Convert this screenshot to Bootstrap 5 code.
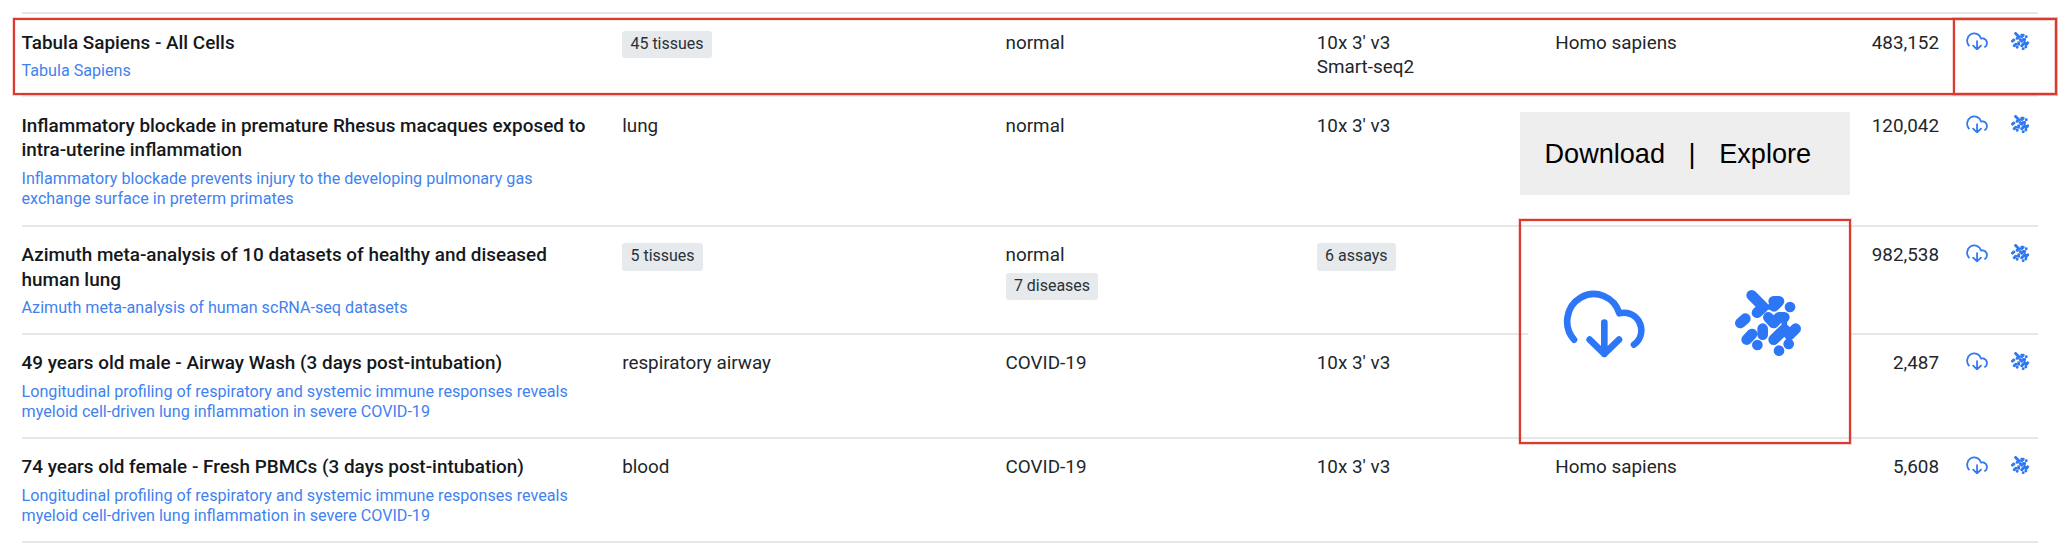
<!DOCTYPE html>
<html lang="en">
<head>
<meta charset="utf-8">
<meta name="viewport" content="width=device-width, initial-scale=1">
<title>Datasets</title>
<link href="https://cdn.jsdelivr.net/npm/bootstrap@5.3.0/dist/css/bootstrap.min.css" rel="stylesheet">
<style>
  body { font-family: Roboto, sans-serif; font-size: 18.85px; line-height: 24.4px; color: #22262a; background: #fff; }
  .stage { width: 2066px; height: 544px; }
  .datasets { width: 2016px; margin-left: 21.5px; padding-top: 12px; }
  .dataset { display: grid; grid-template-columns: 600.7px 383.4px 311.2px 238.6px 383.7px 1fr; padding-top: 16.8px; border-bottom: 2px solid #e6e7e8; }
  .datasets .top-rule { height: 2px; background: #e6e7e8; }
  .h-a { height: 83px; border-bottom-color: #f1eeee; } .h-b { height: 129.5px; } .h-c { height: 108px; } .h-d { height: 104px; }
  .ds-title { font-weight: 500; color: #15181b; font-size: 18.9px; }
  .ds-link { font-size: 16.15px; line-height: 20.6px; margin-top: 6.1px; color: #3f82f0; text-decoration: none; display: block; }
  .chip { display: inline-block; background: #e6eaed; color: #2a3137; border-radius: 3px; height: 27.3px; line-height: 26.8px; padding: 0 8.3px; font-size: 15.97px; }
  .chip-gap { gap: 5.2px; }
  .actions { padding: 1px 0 0 26.5px; gap: 23.6px; color: #3079f0; }
  .ic { stroke: currentColor; fill: none; stroke-linecap: round; stroke-linejoin: round; display: block; flex: none; }
  .ic-cloud { width: 22.3px; height: 18.6px; }
  .ic-cells { width: 18.3px; height: 18.3px; }
  .marker { position: absolute; border: 2px solid #d93b30; box-shadow: 0 0 0 1px rgba(217,59,48,.22), inset 0 0 0 1px rgba(217,59,48,.12); }
  .mark-row { left: 13px; top: 18px; width: 2044px; height: 77px; }
  .mark-actions { left: 1953px; top: 18px; width: 104px; height: 77px; }
  .mark-zoom { left: 1519px; top: 219px; width: 332px; height: 225px; }
  .callout { position: absolute; left: 1520px; top: 112px; width: 330px; height: 83px; background: #eee; color: #000; font: 27.1px/1 "Liberation Sans", Arial, sans-serif; padding: 1px 0 0 24.5px; }
  .callout .sep { margin: 0 23.6px; }
  .enlarged { position: absolute; left: 1528px; top: 228px; width: 321px; height: 208px; background: #fff; color: #2d77f7; padding: 61px 0 0 35.3px; gap: 88.8px; }
  .enlarged .ic-cloud { width: 83.3px; height: 69.3px; }
  .enlarged .ic-cells { width: 66px; height: 66px; margin-top: 1px; }
</style>
</head>
<body>
<svg class="d-none" aria-hidden="true">
  <symbol id="cloud" viewBox="40 28 250 208">
    <path stroke-width="20" d="M73 180A80 82 0 1 1 209 101Q220 98 232 100A53 53 0 0 1 253 195M164 129V223M120 180L164 223L208 180"/>
  </symbol>
  <symbol id="cells" viewBox="30 31 198 198">
    <path stroke-width="32" d="M80 47L115 82L96 99M146 65H162L147 80M195 82h.1M46 130L61 117M65 180L81 163M113 147V165M97 196h.1M130 113L146 130L162 113H178M146 180L178 149L194 165L212 147M191 193h.1M162 213h.1"/>
    <path stroke-width="17" d="M112 82H146M178 113V152M191 165V193"/>
  </symbol>
</svg>
<main class="stage position-relative overflow-hidden">
  <div class="datasets">
    <div class="top-rule"></div>
    <div class="dataset h-a">
      <div><div class="ds-title">Tabula Sapiens - All Cells</div><a class="ds-link" href="#">Tabula Sapiens</a></div>
      <div><span class="chip">45 tissues</span></div>
      <div>normal</div>
      <div>10x 3' v3<br>Smart-seq2</div>
      <div class="d-flex justify-content-between"><span>Homo sapiens</span><span>483,152</span></div>
      <div class="actions d-flex align-items-start"><svg class="ic ic-cloud"><use href="#cloud"/></svg><svg class="ic ic-cells"><use href="#cells"/></svg></div>
    </div>
    <div class="dataset h-b">
      <div><div class="ds-title">Inflammatory blockade in premature Rhesus macaques exposed to<br>intra-uterine inflammation</div><a class="ds-link" href="#">Inflammatory blockade prevents injury to the developing pulmonary gas<br>exchange surface in preterm primates</a></div>
      <div>lung</div>
      <div>normal</div>
      <div>10x 3' v3</div>
      <div class="text-end">120,042</div>
      <div class="actions d-flex align-items-start"><svg class="ic ic-cloud"><use href="#cloud"/></svg><svg class="ic ic-cells"><use href="#cells"/></svg></div>
    </div>
    <div class="dataset h-c">
      <div><div class="ds-title">Azimuth meta-analysis of 10 datasets of healthy and diseased<br>human lung</div><a class="ds-link" href="#">Azimuth meta-analysis of human scRNA-seq datasets</a></div>
      <div><span class="chip">5 tissues</span></div>
      <div class="d-flex flex-column align-items-start chip-gap"><span>normal</span><span class="chip">7 diseases</span></div>
      <div><span class="chip">6 assays</span></div>
      <div class="text-end">982,538</div>
      <div class="actions d-flex align-items-start"><svg class="ic ic-cloud"><use href="#cloud"/></svg><svg class="ic ic-cells"><use href="#cells"/></svg></div>
    </div>
    <div class="dataset h-d">
      <div><div class="ds-title">49 years old male - Airway Wash (3 days post-intubation)</div><a class="ds-link" href="#">Longitudinal profiling of respiratory and systemic immune responses reveals<br>myeloid cell-driven lung inflammation in severe COVID-19</a></div>
      <div>respiratory airway</div>
      <div>COVID-19</div>
      <div>10x 3' v3</div>
      <div class="text-end">2,487</div>
      <div class="actions d-flex align-items-start"><svg class="ic ic-cloud"><use href="#cloud"/></svg><svg class="ic ic-cells"><use href="#cells"/></svg></div>
    </div>
    <div class="dataset h-d">
      <div><div class="ds-title">74 years old female - Fresh PBMCs (3 days post-intubation)</div><a class="ds-link" href="#">Longitudinal profiling of respiratory and systemic immune responses reveals<br>myeloid cell-driven lung inflammation in severe COVID-19</a></div>
      <div>blood</div>
      <div>COVID-19</div>
      <div>10x 3' v3</div>
      <div class="d-flex justify-content-between"><span>Homo sapiens</span><span>5,608</span></div>
      <div class="actions d-flex align-items-start"><svg class="ic ic-cloud"><use href="#cloud"/></svg><svg class="ic ic-cells"><use href="#cells"/></svg></div>
    </div>
  </div>

  <!-- annotations over the table -->
  <div class="callout d-flex align-items-center"><span>Download</span><span class="sep">|</span><span>Explore</span></div>
  <div class="enlarged d-flex align-items-start"><svg class="ic ic-cloud"><use href="#cloud"/></svg><svg class="ic ic-cells"><use href="#cells"/></svg></div>
  <div class="marker mark-row"></div>
  <div class="marker mark-actions"></div>
  <div class="marker mark-zoom"></div>
</main>
<script src="https://cdn.jsdelivr.net/npm/bootstrap@5.3.0/dist/js/bootstrap.bundle.min.js"></script>
</body>
</html>
